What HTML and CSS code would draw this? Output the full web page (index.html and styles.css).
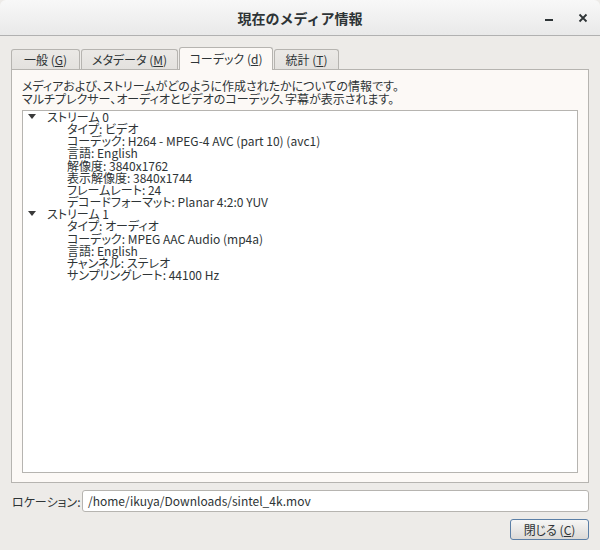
FILE: index.html
```html
<!DOCTYPE html>
<html lang="ja">
<head>
<meta charset="utf-8">
<title>現在のメディア情報</title>
<link rel="stylesheet" href="styles.css">
</head>
<body>
<div class="window">
  <div class="titlebar">
    <div class="title">現在のメディア情報</div>
    <div class="controls">
      <span class="ctl min"><svg width="10" height="10" viewBox="0 0 10 10"><rect x="1" y="6" width="8" height="2" fill="#2e3436"/></svg></span>
      <span class="ctl close"><svg width="10" height="10" viewBox="0 0 10 10"><path d="M1.5 1.5 L8.5 8.5 M8.5 1.5 L1.5 8.5" stroke="#2e3436" stroke-width="1.8"/></svg></span>
    </div>
  </div>
  <div class="content">
    <div class="tabs">
      <div class="tab t1">一般 (<u>G</u>)</div>
      <div class="tab t2">メタデータ (<u>M</u>)</div>
      <div class="tab t3 active">コーデック (<u>d</u>)</div>
      <div class="tab t4">統計 (<u>T</u>)</div>
    </div>
    <div class="panel">
      <div class="desc">メディアおよび、ストリームがどのように作成されたかについての情報です。<br>マルチプレクサー、オーディオとビデオのコーデック、字幕が表示されます。</div>
      <div class="tree">
        <div class="node"><span class="tri"></span><span>ストリーム 0</span></div>
        <div class="leaf">タイプ: ビデオ</div>
        <div class="leaf">コーデック: H264 - MPEG-4 AVC (part 10) (avc1)</div>
        <div class="leaf">言語: English</div>
        <div class="leaf">解像度: 3840x1762</div>
        <div class="leaf">表示解像度: 3840x1744</div>
        <div class="leaf">フレームレート: 24</div>
        <div class="leaf">デコードフォーマット: Planar 4:2:0 YUV</div>
        <div class="node"><span class="tri"></span><span>ストリーム 1</span></div>
        <div class="leaf">タイプ: オーディオ</div>
        <div class="leaf">コーデック: MPEG AAC Audio (mp4a)</div>
        <div class="leaf">言語: English</div>
        <div class="leaf">チャンネル: ステレオ</div>
        <div class="leaf">サンプリングレート: 44100 Hz</div>
      </div>
    </div>
    <div class="location">
      <span class="label">ロケーション:</span>
      <div class="input">/home/ikuya/Downloads/sintel_4k.mov</div>
    </div>
    <div class="buttons">
      <div class="button">閉じる (<u>C</u>)</div>
    </div>
  </div>
</div>
</body>
</html>
```
FILE: styles.css
```css
* { box-sizing: border-box; }
html, body { margin: 0; padding: 0; }
body {
  width: 600px;
  height: 550px;
  background: #edebe8;
  font-family: "Noto Sans CJK JP", "Noto Sans", sans-serif;
  font-feature-settings: "palt";
  color: #2e3436;
  font-size: 12px;
  overflow: hidden;
}
.window {
  width: 600px;
  height: 550px;
  background: #edebe8;
  display: flex;
  flex-direction: column;
}
.titlebar {
  height: 36px;
  flex: none;
  border-radius: 6px 6px 0 0;
  background: linear-gradient(#f8f8f8, #e9e9e9);
  border-bottom: 1px solid #b1b1b1;
  display: flex;
  align-items: center;
  justify-content: center;
  position: relative;
}
.title {
  font-feature-settings: normal;
  font-size: 14px;
  font-weight: bold;
  color: #2e3436;
  line-height: 16px;
  margin-top: 1px;
}
.controls {
  position: absolute;
  right: 12px;
  top: 13px;
  display: flex;
  gap: 24px;
}
.ctl { display: block; width: 10px; height: 10px; }
.ctl svg { display: block; }
.content {
  flex: 1;
  padding: 12px 11px 0 11px;
  display: flex;
  flex-direction: column;
}
.tabs {
  display: flex;
  align-items: flex-end;
  height: 22px;
  margin-bottom: -1px;
}
.tab {
  height: 21px;
  line-height: 19px;
  border: 1px solid #b6b4b0;
  border-bottom: none;
  border-radius: 3px 3px 0 0;
  background: linear-gradient(#ebe9e6, #e3e1de);
  text-align: center;
  font-size: 12px;
  margin-right: 1px;
  white-space: nowrap;
}
.tab.active {
  height: 23px;
  line-height: 21px;
  background: #fcf9f6;
  position: relative;
  z-index: 1;
}
.t1 { width: 69px; }
.t2 { width: 97px; }
.t3 { width: 94px; }
.t4 { width: 65px; }
.panel {
  height: 414px;
  border: 1px solid #b6b4b0;
  background: #fcf9f6;
  padding: 9px 10px 9px 10px;
  display: flex;
  flex-direction: column;
}
.desc {
  line-height: 13px;
  font-size: 12px;
  margin-bottom: 5px;
  white-space: nowrap;
}
.tree {
  flex: 1;
  background: #ffffff;
  border: 1px solid #b6b4b0;
  font-size: 12px;
  line-height: 12.15px;
}
.node {
  display: flex;
  align-items: center;
  padding-left: 5px;
}
.tri {
  width: 0;
  height: 0;
  border-left: 4px solid transparent;
  border-right: 4px solid transparent;
  border-top: 5px solid #3a3a3a;
  margin-right: 11px;
  margin-top: -2px;
}
.leaf { padding-left: 44px; white-space: nowrap; }
.location {
  display: flex;
  align-items: center;
  margin-top: 7px;
  height: 22px;
}
.label {
  padding-left: 1px;
  width: 71px;
  flex: none;
  font-size: 12px;
  white-space: nowrap;
}
.input {
  flex: 1;
  height: 22px;
  border: 1px solid #b6b4b0;
  border-radius: 3px;
  background: #ffffff;
  padding-left: 5px;
  line-height: 20px;
  font-size: 12px;
}
.buttons {
  display: flex;
  justify-content: flex-end;
  margin-top: 7px;
}
.button {
  width: 79px;
  height: 21px;
  border: 1px solid #5b7fa6;
  border-radius: 3px;
  background: linear-gradient(#f6f6f5, #dcdad7);
  text-align: center;
  line-height: 19px;
  font-size: 12px;
  white-space: nowrap;
}
```
